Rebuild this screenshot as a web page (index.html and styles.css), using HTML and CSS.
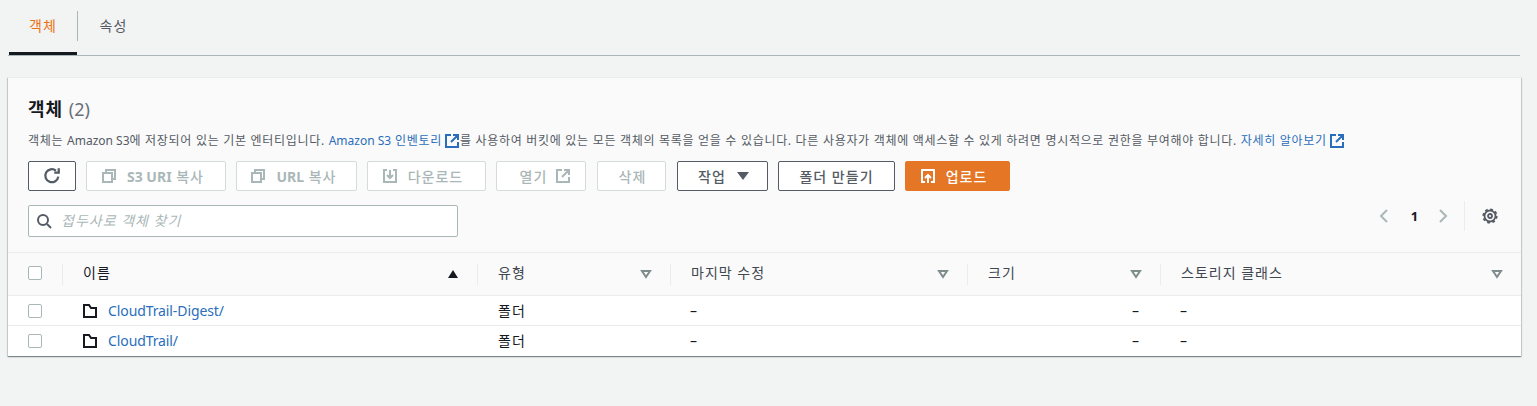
FILE: index.html
```html
<!DOCTYPE html>
<html lang="ko">
<head>
    <meta charset="UTF-8">
    <title>객체</title>
    <link rel="stylesheet" href="styles.css">
</head>
<body>
    <div class="tabs">
        <a class="tab active">객체</a>
        <a class="tab">속성</a>
    </div>

    <div class="card">
        <div class="card-head">
            <h2 class="title">객체 <span class="count">(2)</span></h2>
            <p class="desc">객체는 <span class="latin">Amazon S3</span>에 저장되어 있는 기본 엔터티입니다. <a class="link"><span class="latin">Amazon S3</span> 인벤토리<svg class="ext" viewBox="0 0 16 16"><path d="M7 2H2v12h12V9M9 2h5v5M14 2 7 9"/></svg></a>를 사용하여 버킷에 있는 모든 객체의 목록을 얻을 수 있습니다. 다른 사용자가 객체에 액세스할 수 있게 하려면 명시적으로 권한을 부여해야 합니다. <a class="link">자세히 알아보기<svg class="ext" viewBox="0 0 16 16"><path d="M7 2H2v12h12V9M9 2h5v5M14 2 7 9"/></svg></a></p>

            <div class="actions">
                <button class="btn btn-refresh"><svg class="icon" viewBox="0 0 16 16"><path d="M13.600 8.500A5.800 5.800 0 1 1 11.500 3.200M14 1v4h-4"/></svg></button>
                <button class="btn off btn-s3"><svg class="icon" viewBox="0 0 16 16"><path d="M5 5V2h9v9h-3M2 5h9v9H2z"/></svg><span><b class="latin">S3 URI</b> 복사</span></button>
                <button class="btn off btn-url"><svg class="icon" viewBox="0 0 16 16"><path d="M5 5V2h9v9h-3M2 5h9v9H2z"/></svg><span><b class="latin">URL</b> 복사</span></button>
                <button class="btn off btn-down"><svg class="icon" viewBox="0 0 16 16"><path d="M5 2H2v12h12V2h-3M8 2v8M5 7l3 3 3-3"/></svg>다운로드</button>
                <button class="btn off btn-open">열기<svg class="icon icon-after" viewBox="0 0 16 16"><path d="M7 2H2v12h12V9M9 2h5v5M14 2 7 9"/></svg></button>
                <button class="btn off btn-del">삭제</button>
                <button class="btn btn-act">작업<span class="caret"></span></button>
                <button class="btn btn-folder">폴더 만들기</button>
                <button class="btn primary"><svg class="icon" viewBox="0 0 16 16"><path d="M5 14H2V2h12v12h-3M8 15V7M5 10l3-3 3 3"/></svg>업로드</button>
            </div>

            <div class="filter-row">
                <div class="search">
                    <svg class="icon search-icon" viewBox="0 0 16 16"><circle cx="7" cy="7" r="5"/><path d="m11 11 4 4"/></svg>
                    <span class="placeholder">접두사로 객체 찾기</span>
                </div>
                <div class="pager">
                    <svg class="chev" viewBox="0 0 16 16"><path d="M11 2 5 8l6 6"/></svg>
                    <span class="page">1</span>
                    <svg class="chev" viewBox="0 0 16 16"><path d="m5 2 6 6-6 6"/></svg>
                    <span class="pager-sep"></span>
                    <svg class="gear" viewBox="0 0 16 16"><circle cx="8" cy="8" r="2"/><circle cx="8" cy="8" r="5.500"/><circle class="gear-teeth" cx="8" cy="8" r="6.800"/></svg>
                </div>
            </div>
        </div>

        <div class="row row-head">
            <div class="cell cell-check"><span class="check"></span></div>
            <div class="cell name-head">이름<svg class="sort" viewBox="0 0 12 10"><path class="sort-up" d="M6 1l5 8H1z"/></svg></div>
            <div class="cell">유형<svg class="sort" viewBox="0 0 12 10"><path d="M2 2h8L6 8z"/></svg></div>
            <div class="cell">마지막 수정<svg class="sort" viewBox="0 0 12 10"><path d="M2 2h8L6 8z"/></svg></div>
            <div class="cell">크기<svg class="sort" viewBox="0 0 12 10"><path d="M2 2h8L6 8z"/></svg></div>
            <div class="cell">스토리지 클래스<svg class="sort" viewBox="0 0 12 10"><path d="M2 2h8L6 8z"/></svg></div>
        </div>
        <div class="row">
            <div class="cell cell-check"><span class="check"></span></div>
            <div class="cell"><svg class="folder" viewBox="0 0 16 16"><path d="M2 2h5l2 3h5v9H2z"/></svg><a class="link file-name">CloudTrail-Digest/</a></div>
            <div class="cell">폴더</div>
            <div class="cell"><span class="dash">–</span></div>
            <div class="cell cell-size">–</div>
            <div class="cell"><span class="dash">–</span></div>
        </div>
        <div class="row">
            <div class="cell cell-check"><span class="check"></span></div>
            <div class="cell"><svg class="folder" viewBox="0 0 16 16"><path d="M2 2h5l2 3h5v9H2z"/></svg><a class="link file-name">CloudTrail/</a></div>
            <div class="cell">폴더</div>
            <div class="cell"><span class="dash">–</span></div>
            <div class="cell cell-size">–</div>
            <div class="cell"><span class="dash">–</span></div>
        </div>
    </div>
</body>
</html>
```

FILE: styles.css
```css
* {
    box-sizing: border-box;
}

html,
body {
    margin: 0;
    padding: 0;
}

body {
    background: #f2f3f3;
    color: #16191f;
    font-family: "Noto Sans", "Noto Sans CJK KR", sans-serif;
    font-size: 14px;
    line-height: 20px;
    letter-spacing: 1px;
    height: 406px;
    overflow: hidden;
}

.latin {
    letter-spacing: 0;
}

.tabs {
    display: flex;
    height: 56px;
    margin: 0 17px 0 8px;
    padding: 11px 0 0 1px;
    border-bottom: 1px solid #aab7b8;
}

.tab {
    height: 44px;
    width: 69px;
    text-align: center;
    padding: 5px 0 0 2px;
    color: #545b64;
}

.tab.active {
    color: #ec7211;
    position: relative;
    border-right: 1px solid #aab7b8;
    height: 30px;
    padding-left: 0;
}

.tab.active::after {
    content: "";
    position: absolute;
    left: 0;
    right: 0;
    top: 41px;
    height: 3px;
    background: #16191f;
}

.card {
    width: 1513px;
    margin: 21px 0 0 8px;
    background: #fff;
    box-shadow: 0 1px 1px 0 rgba(0, 28, 36, 0.3), 1px 1px 1px 0 rgba(0, 28, 36, 0.15), -1px 1px 1px 0 rgba(0, 28, 36, 0.15);
    border-top: 1px solid #eaeded;
}

.card-head {
    background: #fafafa;
    height: 175px;
    padding: 19px 20px 0;
    border-bottom: 1px solid #eaeded;
}

.title {
    margin: 0;
    font-size: 18px;
    line-height: 24px;
    font-weight: 700;
}

.count {
    color: #687078;
    font-weight: 400;
    letter-spacing: 0;
}

.desc {
    margin: 10px 0 0;
    font-size: 12px;
    line-height: 20px;
    letter-spacing: 0.7px;
    color: #545b64;
    white-space: nowrap;
}

.link {
    color: #2a6ebb;
}

.file-name {
    letter-spacing: -0.1px;
}

.ext {
    width: 16px;
    height: 16px;
    margin-left: 2px;
    vertical-align: -4px;
    fill: none;
    stroke: #2a6ebb;
    stroke-width: 2;
}

.actions {
    display: flex;
    gap: 10px;
    margin-top: 10px;
}

.btn {
    display: flex;
    align-items: center;
    justify-content: center;
    height: 30px;
    padding: 0;
    background: #fff;
    border: 1px solid #545b64;
    border-radius: 2px;
    color: #545b64;
    font-family: inherit;
    font-size: 14px;
    font-weight: 500;
    letter-spacing: 1px;
}

.btn.off {
    border-color: #d5dbdb;
    color: #aab7b8;
}

.btn.primary {
    width: 105px;
    padding-right: 8px;
    background: #e47625;
    border-color: #e47625;
    color: #fff;
}

.btn-refresh { width: 48px; }
.btn-s3 { width: 140px; padding-right: 7px; }
.btn-url { width: 121px; padding-right: 6px; }
.btn-down { width: 119px; padding-right: 8px; }
.btn-open { width: 90px; padding-left: 9px; }
.btn-del { width: 69px; margin-left: 1px; padding-left: 2px; }
.btn-act { width: 91px; margin-left: 1px; padding-left: 2px; }
.btn-folder { width: 117px; }

.icon {
    width: 16px;
    height: 16px;
    margin-right: 10px;
    fill: none;
    stroke: currentColor;
    stroke-width: 2;
}

.btn-refresh .icon {
    margin-right: 0;
    width: 18px;
    height: 18px;
}

.icon-after {
    margin: 0 0 0 8px;
}

.caret {
    width: 0;
    height: 0;
    margin-left: 11px;
    border-left: 6px solid transparent;
    border-right: 6px solid transparent;
    border-top: 8px solid #545b64;
}

.filter-row {
    display: flex;
    justify-content: space-between;
    margin-top: 14px;
}

.search {
    display: flex;
    align-items: center;
    width: 430px;
    height: 32px;
    padding-left: 7px;
    background: #fff;
    border: 1px solid #aab7b8;
    border-radius: 2px;
}

.search-icon {
    margin-right: 9px;
    color: #545b64;
}

.placeholder {
    color: #aab7b8;
    font-style: italic;
}

.pager {
    display: flex;
    align-items: center;
    height: 30px;
    margin: -4px 3px 0 0;
}

.chev {
    width: 16px;
    height: 16px;
    fill: none;
    stroke: #aab7b8;
    stroke-width: 2;
}

.page {
    width: 43px;
    padding-left: 2px;
    text-align: center;
    font-size: 13px;
    font-weight: 700;
    letter-spacing: 0;
}

.pager-sep {
    width: 1px;
    height: 30px;
    background: #eaeded;
    margin: 0 17px 0 13px;
}

.gear {
    width: 16px;
    height: 16px;
    fill: none;
    stroke: #545b64;
    stroke-width: 1.800;
}

.gear-teeth {
    stroke-width: 1.600;
    stroke-dasharray: 2.800 2.540;
}

.row {
    display: grid;
    grid-template-columns: 54px 415px 193px 297px 193px 1fr;
    height: 30px;
    background: #fff;
    border-bottom: 1px solid #eaeded;
}

.row:last-child {
    border-bottom: 0;
}

.row-head {
    height: 43px;
    background: #fafafa;
}

.cell {
    display: flex;
    align-items: center;
    padding-left: 21px;
    position: relative;
}

.cell-check {
    padding-left: 20px;
}

.row-head .cell {
    padding-bottom: 2px;
    color: #414750;
}

.row-head .cell::before {
    content: "";
    position: absolute;
    left: 0;
    top: 11px;
    height: 21px;
    width: 1px;
    background: #eaeded;
}

.row-head .cell-check::before {
    display: none;
}

.row-head .name-head {
    color: #16191f;
}

.cell-size {
    justify-content: flex-end;
    padding-right: 20px;
}

.dash {
    margin-left: -1px;
}

.check {
    width: 14px;
    height: 14px;
    background: #fff;
    border: 1px solid #aab7b8;
    border-radius: 2px;
}

.sort {
    position: absolute;
    right: 18px;
    top: 16px;
    width: 12px;
    height: 10px;
    fill: none;
    stroke: #7f8c8d;
    stroke-width: 2;
}

.sort .sort-up {
    fill: #16191f;
    stroke: none;
}

.folder {
    width: 16px;
    height: 16px;
    margin: 0 10px 0 -1px;
    fill: none;
    stroke: #16191f;
    stroke-width: 2;
}
```
